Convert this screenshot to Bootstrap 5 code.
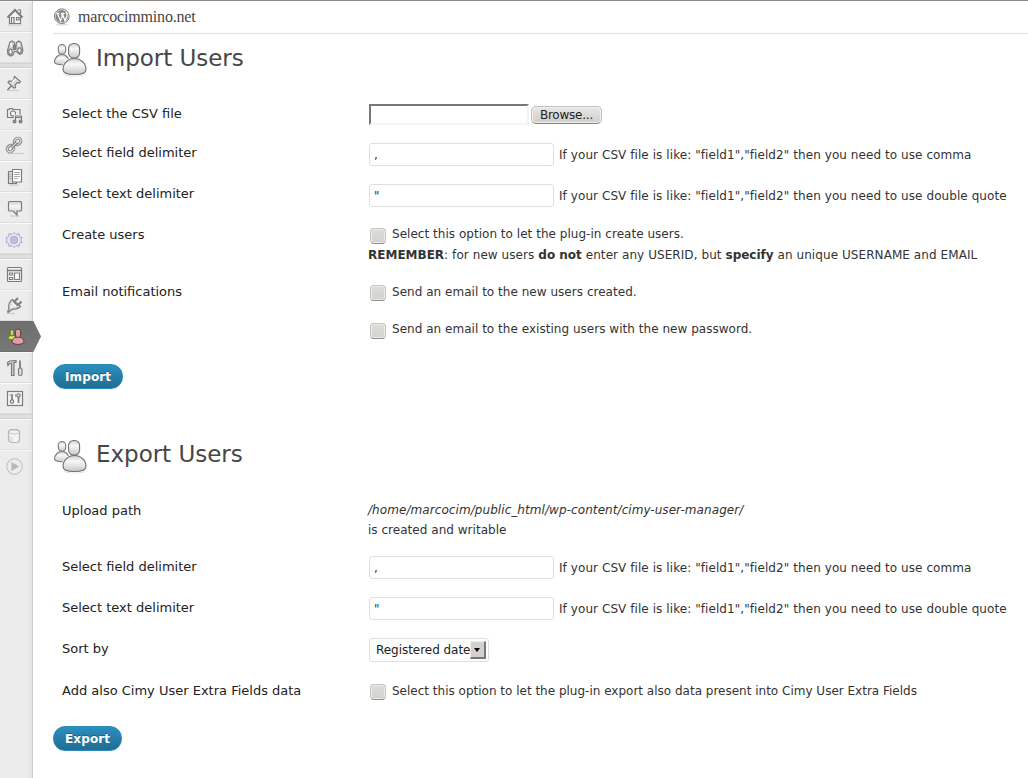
<!DOCTYPE html>
<html lang="en">
<head>
<meta charset="utf-8">
<title>Import Users</title>
<link rel="stylesheet" href="https://cdn.jsdelivr.net/npm/bootstrap@5.3.0/dist/css/bootstrap.min.css">
<script src="https://cdn.jsdelivr.net/npm/bootstrap@5.3.0/dist/js/bootstrap.bundle.min.js"></script>
<style>
body{font:12px/20px "DejaVu Sans",sans-serif;color:#333;background:#fff;height:778px;overflow:hidden;border-top:1px solid #8e8883}
.side{width:33px;height:777px;background:linear-gradient(90deg,#ececec 28px,#e3e3e3 32px,#ccc 32px)}
.side a{display:block;height:31px;width:32px;border-top:1px solid #f9f9f9;border-bottom:1px solid #dedede}
.side a svg{display:block;margin-top:-1px;fill:none;stroke:#7c7c7c;stroke-width:1.2;overflow:visible}
.side hr{height:5px;margin:0;border:0;opacity:1;background:#dfdfdf;border-top:1px solid #d2d2d2;border-bottom:1px solid #d0d0d0;width:32px}
.side a.on{background:linear-gradient(#6f6f6f,#777);border-color:#6d6d6d;width:33px;position:relative}
.side a.on::after{content:"";position:absolute;left:32px;top:-1px;width:9px;height:31px;background:linear-gradient(#6f6f6f,#777);clip-path:polygon(0 0,15% 0,100% 50%,15% 100%,0 100%)}
.side .faded svg{opacity:.45}
.side a:last-child{border-bottom:0}
.main-area{margin-left:20px}
.site{height:33px;border-bottom:1px solid #dfdfdf;font:16px/20px "Liberation Serif",serif;color:#464646}
.site svg{margin-top:7px}
.site span{margin-left:8px;padding-top:6px;letter-spacing:-.18px}
h2{font:23px/35px "DejaVu Sans",sans-serif;color:#464646;margin:0;padding-left:9px;letter-spacing:-.03px}
.title-bar{height:70px;padding-top:7px}
.title-bar svg{margin:1px -1px 0 1px}
.title-two{padding-top:48px;height:112px}
.title-two svg{margin-top:2px}
.frow{display:grid;grid-template-columns:306px 1fr;margin-left:9px;height:41px;white-space:nowrap}
.frow>label{font-size:13px;line-height:18px;padding-top:1px;color:#222}
.down>label{padding-top:2px}
.field{width:185px;height:23px;border:1px solid #dfdfdf;border-radius:3px;padding:0 4px;font:12px/20px "DejaVu Sans",sans-serif;color:#333;margin:0 5px 0 1px;background:#fff}
.q{line-height:23px}
.q span{padding-top:1px}
.q span,.wide{letter-spacing:.072px}
.wide b{letter-spacing:0}
.hint{margin-top:-1px;letter-spacing:.03px}
.filebox{width:160px;height:21px;border:2px solid;border-color:#777 #f4f4f4 #f4f4f4 #777;margin:0 2px 0 1px}
.browse{width:71px;height:18px;margin-top:2px;padding:0;border:1px solid #c3c0bb;border-bottom-color:#85827e;border-radius:5px;background:linear-gradient(#e8e7e5,#d0cec9);font:12px/15px "DejaVu Sans",sans-serif;letter-spacing:-.22px;color:#222;box-shadow:inset 0 0 0 1px #f1f0ee}
.tick{appearance:none;flex:none;width:16px;height:16px;margin:3px 6px 0 2px;border:1px solid #c6c4c1;border-bottom-color:#8f8d8a;border-radius:4px;background:linear-gradient(#dddcda,#d3d2ce);box-shadow:inset 0 0 0 1px #eeedeb}
.go{height:25px;border:1px solid #298cba;border-radius:12px;background:linear-gradient(#2a8fbe,#216d92);color:#fff;font:bold 12px/22px "DejaVu Sans",sans-serif;letter-spacing:.12px;padding:0 11px;text-shadow:0 -1px 0 rgba(0,0,0,.3)}
.pick{width:120px;height:24px;border:1px solid #dfdfdf;border-radius:3px;margin-left:1px}
.pick select{appearance:none;border:0;background:none;width:100%;height:22px;padding:0 6px;font:12px/20px "DejaVu Sans",sans-serif;letter-spacing:-.04px;color:#222}
.pick i{position:absolute;right:2px;top:2px;width:16px;height:18px;background:#d4d1cd;border:2px solid;border-color:#f0efed #777 #777 #f0efed;border-left-width:1px;border-top-width:1px}
.pick i::after{content:"";position:absolute;left:3px;top:6px;border:3px solid transparent;border-top:4px solid #000;border-bottom:0}
</style>
</head>
<body>
<svg width="0" height="0" class="position-absolute">
<defs>
<linearGradient id="g" x2="0" y2="1"><stop stop-color="#cfcfcf"/><stop offset=".35" stop-color="#f8f8f8"/><stop offset="1" stop-color="#c8c8c8"/></linearGradient>
<symbol id="people" viewBox="0 0 34 36">
<ellipse cx="20.5" cy="32" rx="11" ry="2.4" fill="#ddd"/>
<g fill="url(#g)" stroke="#777" stroke-width="1.1"><path d="M.6 20c0-4 3.300-7.500 7.300-7.500s7.200 3.500 7.200 7.500c0 1.800-3 2.800-7.200 2.800S.6 21.800.6 20z"/><rect x="4.300" y="2.500" width="7.400" height="9.800" rx="3.700"/></g>
<g fill="url(#g)" stroke="#fff" stroke-width="2.500"><path d="M9 27.500c0-6 5-11 11.500-11S32 21.500 32 27.500c0 3.500-5 5-11.500 5S9 31 9 27.500z"/><rect x="14.600" y="1.500" width="11" height="14.500" rx="5"/></g>
<g fill="url(#g)" stroke="#707070" stroke-width="1.100"><path d="M9 27.500c0-6 5-11 11.500-11S32 21.500 32 27.500c0 3.500-5 5-11.500 5S9 31 9 27.500z"/><rect x="14.600" y="1.500" width="11" height="14.500" rx="5"/></g>
</symbol>
</defs></svg>
<div class="d-flex">
<nav class="side flex-shrink-0">
<a><svg width="32" height="31"><path d="M8 24h14" stroke="#ccc"/><path d="M9.500 16v6.500h11V16M18.500 9.500V9h2v4" fill="#fff"/><path d="M7.500 16.500 15 9l7.500 7.500" stroke-width="2"/><path d="M10 16.500 15 11.500l5 5v5.500H10z" fill="#f5f5f5" stroke="none"/><path d="M11.500 22.500v-6h2.500v6M16.500 16.500h2.500v2.500h-2.500z"/></svg></a>
<a><svg width="32" height="31"><path d="m10 10 2-1 2.500 1.500V13h1.500l.5-2.500L18.500 9 21 10.500l1.800 7.500-.8 3.500-2.500.8-3-2.800h-2L13 23l-2.500 1-2.500-1.500-.5-4z" fill="#d5d5d5"/><path d="M13.500 13.500h2.500v4h-2.500z" fill="#888"/><ellipse cx="10.500" cy="19.700" rx="1.700" ry="2.600" fill="#fff"/><ellipse cx="19.500" cy="18.500" rx="1.700" ry="2.600" fill="#fff"/><path d="M11 11v4M19 11v3" stroke="#fff"/></svg></a>
<hr>
<a><svg width="32" height="31"><path d="M7 22.500h12" stroke="#ccc"/><path d="m7.500 22 6-6.500" stroke-width="1.400"/><path d="m14.500 8.500 6 5-1 1.500-2-.5-2.500 2.500.5 2.500-1.500.5-6-5.500 1-1.500 2.500.5 3-2.500-.5-1.500z" fill="#ddd"/><path d="m12 14 4-3.500" stroke="#fff"/></svg></a>
<a><svg width="32" height="31"><path d="M7.500 10.500h2v-1h3v1h7.500v8h-12.500z" fill="#eee"/><circle cx="13" cy="14.500" r="2.500" fill="#fff"/><path d="M15.500 22v-5h6v5" stroke="#eee" stroke-width="3"/><path d="M15.500 22.500v-5.500h6v5.500M15.500 18.500h6"/><circle cx="14.500" cy="22.500" r="1.400" fill="#999"/><circle cx="20.500" cy="22.500" r="1.400" fill="#999"/></svg></a>
<a><svg width="32" height="31"><path d="M8 23.500h16" stroke="#ccc"/><g transform="rotate(-45 14 15)"><rect x="5.500" y="12.200" width="7" height="5.600" rx="2.800" stroke-width="3"/><rect x="15.500" y="12.200" width="7" height="5.600" rx="2.800" stroke-width="3"/><rect x="5.500" y="12.200" width="7" height="5.600" rx="2.800" stroke="#ddd"/><rect x="15.500" y="12.200" width="7" height="5.600" rx="2.800" stroke="#ddd"/><path d="M10 15h8" stroke-width="3.500"/><path d="M10 15h8" stroke="#ddd"/></g></svg></a>
<a><svg width="32" height="31"><path d="M8.500 10.500h8v12h-8z" fill="#ddd"/><path d="M12.500 8.500h9v12.500h-9z" fill="#fff"/><path d="M14 11.500h6M14 13.500h6M14 15.500h6M14 17.500h4M9.500 13.500h2M9.500 15.500h2M9.500 17.500h2" stroke="#aaa" stroke-width="1"/><path d="M9 24h9" stroke="#ccc"/></svg></a>
<a><svg width="32" height="31"><path d="M10 24h9" stroke="#ccc"/><path d="M9.500 9.500h11q1 0 1 1v7.500q0 1-1 1H17v4l-4-4H9.500q-1 0-1-1v-7.500q0-1 1-1z" fill="url(#g)"/></svg></a>
<a><svg width="32" height="31"><g stroke="#aaa8cf"><path d="m14 9.500 2 2 3-.8.500 3 2.500 1-1.200 2.300 1.200 2.300-2.500 1-.5 3-3-.8-2 2-2-2-3 .8-.5-3-2.500-1L7.200 17 6 14.700l2.500-1 .5-3 3 .8z" fill="#e6e5f4" stroke-width="1"/><circle cx="14" cy="17" r="3.400" fill="#d5d3ec"/><path d="M13 16h2v2h-2z" fill="#fff"/></g></svg></a>
<hr>
<a><svg width="32" height="31"><rect x="7.500" y="8.500" width="14" height="14" rx="1" fill="#f4f4f4"/><path d="M8 11.500h13" stroke-width="1.500"/><path d="M9.500 14h3v2h-3zM9.500 18.500h3v2h-3zM14.500 14h5v6.500h-5z" fill="#fff"/></svg></a>
<a><svg width="32" height="31"><path d="M7 23.500h8" stroke="#ccc"/><path d="m15 11 3-3M18.500 14.500l3-3" stroke-width="2"/><path d="m12.500 9.500 8 7c-2 2-5 3-7.500 2.500L8 22.500c-1-1 0-2 1-3-1-4 .5-8 3.500-10z" fill="#ddd"/><path d="m12 12.500 4 4M11 15.500l2 2" stroke="#fff"/><path d="m13 11 5 5"/></svg></a>
<a class="on"><svg width="32" height="31"><g fill="#cddc68" stroke="#596018" stroke-width=".8"><path d="M8 18c0-3 2-4 4-4s4 1 4 4q-4 2-8 0z"/><rect x="10.200" y="8.800" width="3.500" height="6" rx="1.700"/></g><g fill="#df9da4" stroke="#542f35" stroke-width=".8"><path d="M12 21.500c0-4 3-5.500 6-5.500s6 1.500 6 5.500q-6 4-12 0z"/><rect x="15.500" y="8" width="5" height="8.500" rx="2.500"/></g></svg></a>
<a><svg width="32" height="31"><path d="M7.500 10.500c1.500-2 4-2 8.500-2v2h-2v13h-2.500v-12H9.500l-1.500 2z" fill="#ccc"/><path d="M20 8.500v8" stroke-width="1.800"/><rect x="18.500" y="16" width="3.500" height="7.500" rx="1.500" fill="#ddd"/></svg></a>
<a><svg width="32" height="31"><rect x="7.500" y="8.500" width="15" height="14" fill="#f5f5f5"/><path d="M12 11v6M18.500 14v6" stroke-width="1.700"/><circle cx="12" cy="18.500" r="1.700"/><circle cx="18.500" cy="12.500" r="1.700"/><path d="M15.500 11v3M10 11v2" stroke="#aaa" stroke-width="1"/></svg></a>
<hr>
<a class="faded"><svg width="32" height="31"><rect x="8.500" y="10.500" width="11" height="13" rx="3" fill="#fff"/><ellipse cx="14" cy="13" rx="5" ry="2" stroke-width=".8"/><path d="M10 17v5M12 18v5" stroke="#bbb"/></svg></a>
<a class="faded"><svg width="32" height="31"><circle cx="14.500" cy="16.500" r="7.800" fill="#eee" stroke-width="1"/><path d="m12 13 6 3.500-6 3.500z" fill="#777"/></svg></a>
</nav>
<main class="main-area flex-grow-1">
<header class="site d-flex">
<svg width="17" height="18"><ellipse cx="9" cy="16.500" rx="6" ry="1" fill="#ddd"/><circle cx="8.800" cy="8.200" r="7.300" fill="#fff" stroke="#777"/><circle cx="8.800" cy="8.200" r="6.300" fill="#858585"/><path d="M3.500 5.500h3M8 5.500h3.500M4.500 5.500 7.500 13 9.300 8 8.500 5.500M9.300 5.500l2.800 7.500 1.800-5q.5-2-1-4" fill="none" stroke="#fff" stroke-width="1.300"/></svg>
<span>marcocimmino.net</span></header>
<div class="title-bar d-flex"><svg width="34" height="36"><use href="#people"/></svg><h2>Import Users</h2></div>
<form onsubmit="return false">
<div class="frow" style="height:39px"><label>Select the CSV file</label><div class="d-flex"><div class="filebox"></div><button class="browse">Browse...</button></div></div>
<div class="frow"><label>Select field delimiter</label><div class="d-flex q"><input class="field" value=","><span>If your CSV file is like: "field1","field2" then you need to use comma</span></div></div>
<div class="frow"><label>Select text delimiter</label><div class="d-flex q"><input class="field" value="&quot;"><span>If your CSV file is like: "field1","field2" then you need to use double quote</span></div></div>
<div class="frow" style="height:57px"><label>Create users</label><div><div class="d-flex mb-0 pb-0" style="height:20px"><input type="checkbox" class="tick"><span class="hint">Select this option to let the plug-in create users.</span></div><div class="wide">
<b>REMEMBER</b>: for new users <b>do not</b> enter any USERID, but <b>specify</b> an unique USERNAME and EMAIL</div></div></div>
<div class="frow" style="height:38px"><label>Email notifications</label><div class="d-flex"><input type="checkbox" class="tick"><span class="hint mt-0">Send an email to the new users created.</span></div></div>
<div class="frow" style="height:44px"><span></span><div class="d-flex"><input type="checkbox" class="tick"><span class="hint">Send an email to the existing users with the new password.</span></div></div>
<button class="go d-block">Import</button>
</form>
<div class="title-bar title-two d-flex"><svg width="34" height="36"><use href="#people"/></svg><h2>Export Users</h2></div>
<form onsubmit="return false">
<div class="frow" style="height:55px"><label>Upload path</label><div class="hint"><em class="wide">/home/marcocim/public_html/wp-content/cimy-user-manager/</em><br>is created and writable</div></div>
<div class="frow down"><label>Select field delimiter</label><div class="d-flex q"><input class="field" value=","><span>If your CSV file is like: "field1","field2" then you need to use comma</span></div></div>
<div class="frow down"><label>Select text delimiter</label><div class="d-flex q"><input class="field" value="&quot;"><span>If your CSV file is like: "field1","field2" then you need to use double quote</span></div></div>
<div class="frow down" style="height:43px"><label>Sort by</label><div><div class="pick position-relative"><select><option>Registered date</option></select><i></i></div></div></div>
<div class="frow" style="height:45px"><label>Add also Cimy User Extra Fields data</label><div class="d-flex"><input type="checkbox" class="tick"><span>Select this option to let the plug-in export also data present into Cimy User Extra Fields</span></div></div>
<button class="go d-block">Export</button>
</form>
</main>
</div>
</body>
</html>
